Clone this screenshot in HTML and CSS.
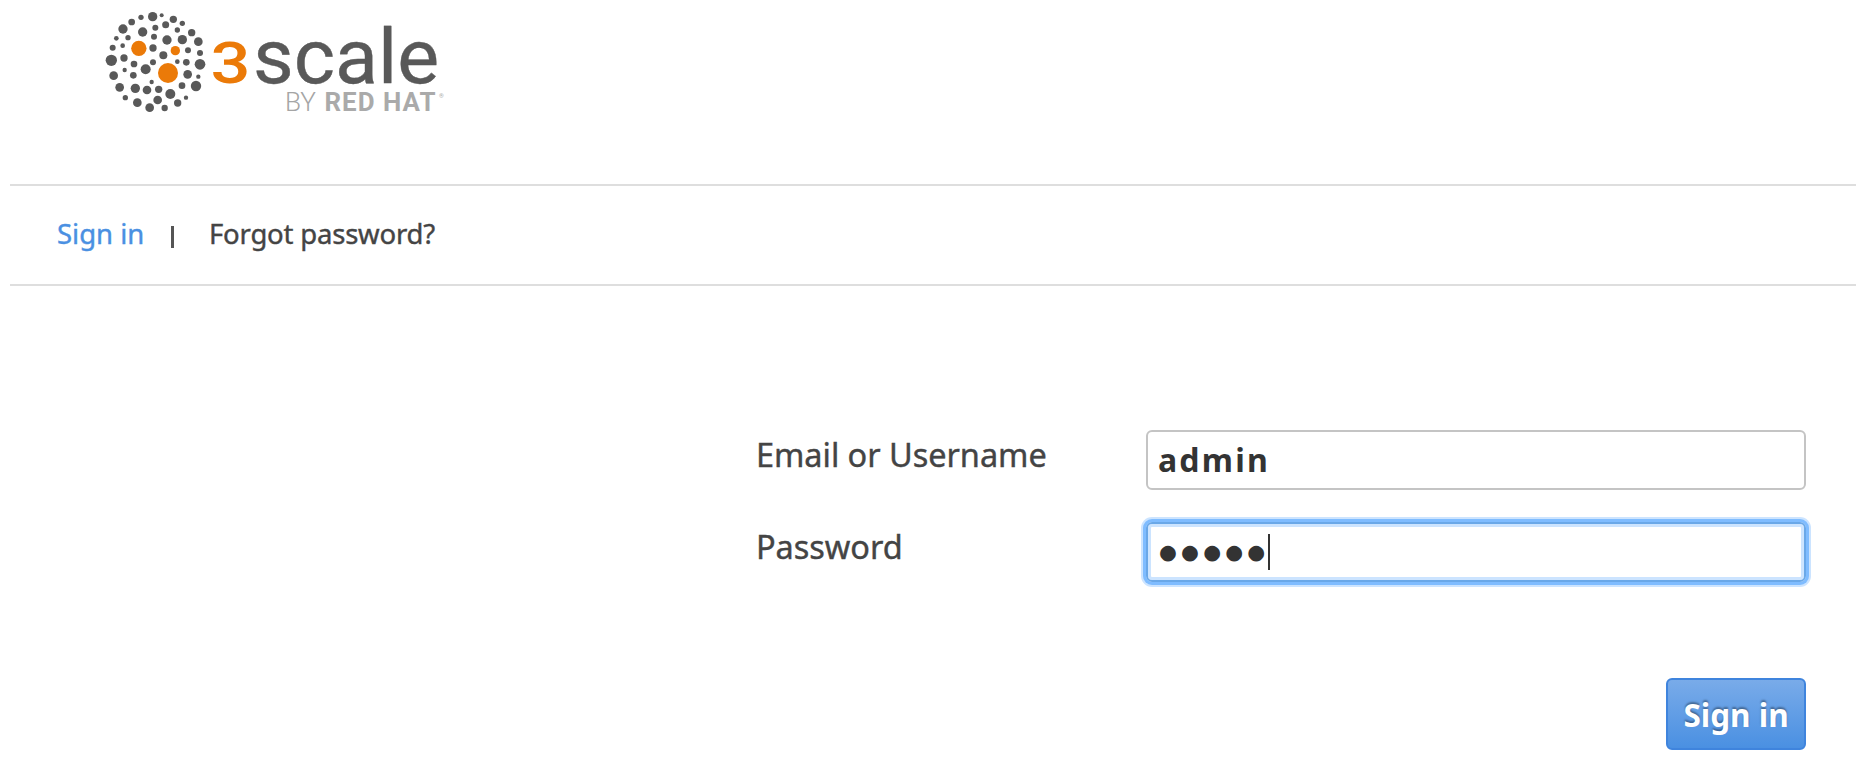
FILE: index.html
```html
<!DOCTYPE html>
<html lang="en">
<head>
<meta charset="utf-8">
<title>3scale - Sign in</title>
<link rel="stylesheet" href="styles.css">
</head>
<body>
<header class="header">
  <svg class="logo" viewBox="0 0 350 115" role="img" aria-label="3scale by Red Hat">
    <g transform="scale(.33333)" fill="#595959">
      <circle cx="158" cy="35" r="14"/><circle cx="123" cy="37" r="8"/><circle cx="185" cy="31" r="6"/><circle cx="95" cy="51" r="10"/><circle cx="220" cy="43" r="11"/><circle cx="247" cy="55" r="8"/><circle cx="197" cy="59" r="10.500"/><circle cx="166" cy="68" r="9"/><circle cx="69" cy="72" r="14"/><circle cx="128" cy="81" r="14"/><circle cx="232" cy="75" r="8"/><circle cx="275" cy="83" r="11"/><circle cx="49" cy="100" r="7"/><circle cx="84" cy="98" r="8"/><circle cx="162" cy="95" r="9"/><circle cx="201" cy="105" r="14"/><circle cx="247" cy="104" r="14"/><circle cx="295" cy="110" r="13"/><circle cx="38" cy="128" r="9"/><circle cx="68" cy="122" r="7"/><circle cx="159" cy="129" r="11"/><circle cx="264" cy="136" r="9"/><circle cx="300" cy="144" r="9"/><circle cx="34" cy="166" r="17"/><circle cx="72" cy="159" r="11"/><circle cx="190" cy="151" r="12"/><circle cx="102" cy="177" r="10"/><circle cx="159" cy="172" r="9"/><circle cx="232" cy="170" r="7"/><circle cx="259" cy="172" r="10"/><circle cx="300" cy="178" r="16"/><circle cx="74" cy="195" r="6.500"/><circle cx="137" cy="193" r="15"/><circle cx="41" cy="212" r="13"/><circle cx="100" cy="211" r="10"/><circle cx="263" cy="208" r="13"/><circle cx="295" cy="215" r="6.500"/><circle cx="155" cy="231" r="6.500"/><circle cx="59" cy="247" r="13"/><circle cx="106" cy="250" r="14"/><circle cx="141" cy="255" r="13"/><circle cx="176" cy="253" r="11"/><circle cx="246" cy="242" r="10"/><circle cx="288" cy="243" r="15.500"/><circle cx="211" cy="267" r="15"/><circle cx="76" cy="278" r="8"/><circle cx="258" cy="278" r="6.500"/><circle cx="112" cy="293" r="13"/><circle cx="173" cy="285" r="13"/><circle cx="233" cy="294" r="11"/><circle cx="149" cy="308" r="13"/><circle cx="194" cy="309" r="9.500"/>
      <g fill="#eb7a08"><circle cx="116.500" cy="130" r="23"/><circle cx="226" cy="137" r="14"/><circle cx="204" cy="204" r="30"/></g>
    </g>
    <text class="logo-three" x="110.500" y="77.500" textLength="40" lengthAdjust="spacingAndGlyphs">3</text>
    <text class="logo-scale" x="153" y="77.500" textLength="186" lengthAdjust="spacingAndGlyphs">scale</text>
    <text class="logo-by" x="185" y="106" textLength="31" lengthAdjust="spacingAndGlyphs">BY</text>
    <text class="logo-by logo-redhat" x="224.500" y="106" textLength="112" lengthAdjust="spacingAndGlyphs">RED HAT</text>
    <text class="logo-reg" x="339" y="93">®</text>
  </svg>
</header>
<nav class="nav">
  <a class="nav-link nav-current">Sign in</a>
  <span class="divider"></span>
  <a class="nav-link nav-forgot">Forgot password?</a>
</nav>
<main class="form">
  <div class="row">
    <label class="label">Email or Username</label>
    <div class="field">admin</div>
  </div>
  <div class="row">
    <label class="label">Password</label>
    <div class="field field-focus"><span class="dots">●●●●●</span><span class="caret"></span></div>
  </div>
  <button class="submit" type="button">Sign in</button>
</main>
</body>
</html>
```
FILE: styles.css
```css
* { box-sizing: border-box; }
body {
  margin: 0;
  height: 770px;
  overflow: hidden;
  background: #fff;
  color: #444;
  font-family: "Noto Sans", sans-serif;
}
.header { height: 184px; padding: 5px 0 0 100px; }
.logo { display: block; width: 350px; height: 115px; }
.logo text { font-family: Roboto, sans-serif; }
.logo .logo-three { font-size: 58px; font-weight: 500; fill: #eb7a08; }
.logo .logo-scale { font-size: 76px; fill: #595959; stroke: #595959; stroke-width: .4px; }
.logo .logo-by { font-size: 25.5px; font-weight: 300; fill: #a5a5a5; }
.logo .logo-redhat { font-size: 25px; font-weight: 700; letter-spacing: 1px; fill: #aaa; }
.logo .logo-reg { font-size: 6px; fill: #aaa; }
.nav {
  display: flex;
  align-items: center;
  height: 102px;
  margin-left: 10px;
  padding: 0 0 3px 47px;
  border-top: 2px solid #dedede;
  border-bottom: 2px solid #dedede;
  font-size: 27.5px;
}
.nav-link, .label { white-space: nowrap; -webkit-text-stroke: .4px currentColor; }
.nav-current { width: 114px; color: #4a90e2; }
.divider { width: 3px; height: 22px; margin-top: 6px; background: #555; }
.nav-forgot { margin-left: 35px; letter-spacing: -.2px; }
.form {
  display: flex;
  flex-direction: column;
  width: 1050px;
  margin: 144px 0 0 756px;
}
.row { display: flex; justify-content: space-between; margin-bottom: 32px; }
.label { font-size: 32.5px; line-height: 49px; letter-spacing: -.05px; }
.field {
  display: flex;
  align-items: center;
  width: 660px;
  height: 60px;
  padding: 0 0 1px 10px;
  border: 2px solid #c4c4c4;
  border-radius: 6px;
  color: #333;
  font-size: 32px;
  font-weight: 700;
  letter-spacing: 2.2px;
}
.field-focus {
  padding-bottom: 0;
  border-color: #6aa8e8;
  box-shadow: 0 0 0 3px #7fbcff, 0 0 0 5px #cce4ff, inset 0 0 0 3px #cce4ff;
}
.dots {
  width: 110px;
  padding: 0 0 1px 1px;
  font-family: "DejaVu Sans", sans-serif;
  font-size: 20.5px;
  font-weight: 400;
  letter-spacing: 4.2px;
  white-space: nowrap;
}
.caret { width: 2px; height: 36px; background: #333; }
.submit {
  align-self: flex-end;
  width: 140px;
  height: 72px;
  margin-top: 64px;
  padding: 0;
  border: 2px solid #3f84dd;
  border-radius: 6px;
  background: linear-gradient(#79abe9, #4a90e2);
  color: #fff;
  font: 700 31.5px "Noto Sans", sans-serif;
  text-shadow: 0 -2px 2px rgba(0, 0, 0, .35);
}
```
